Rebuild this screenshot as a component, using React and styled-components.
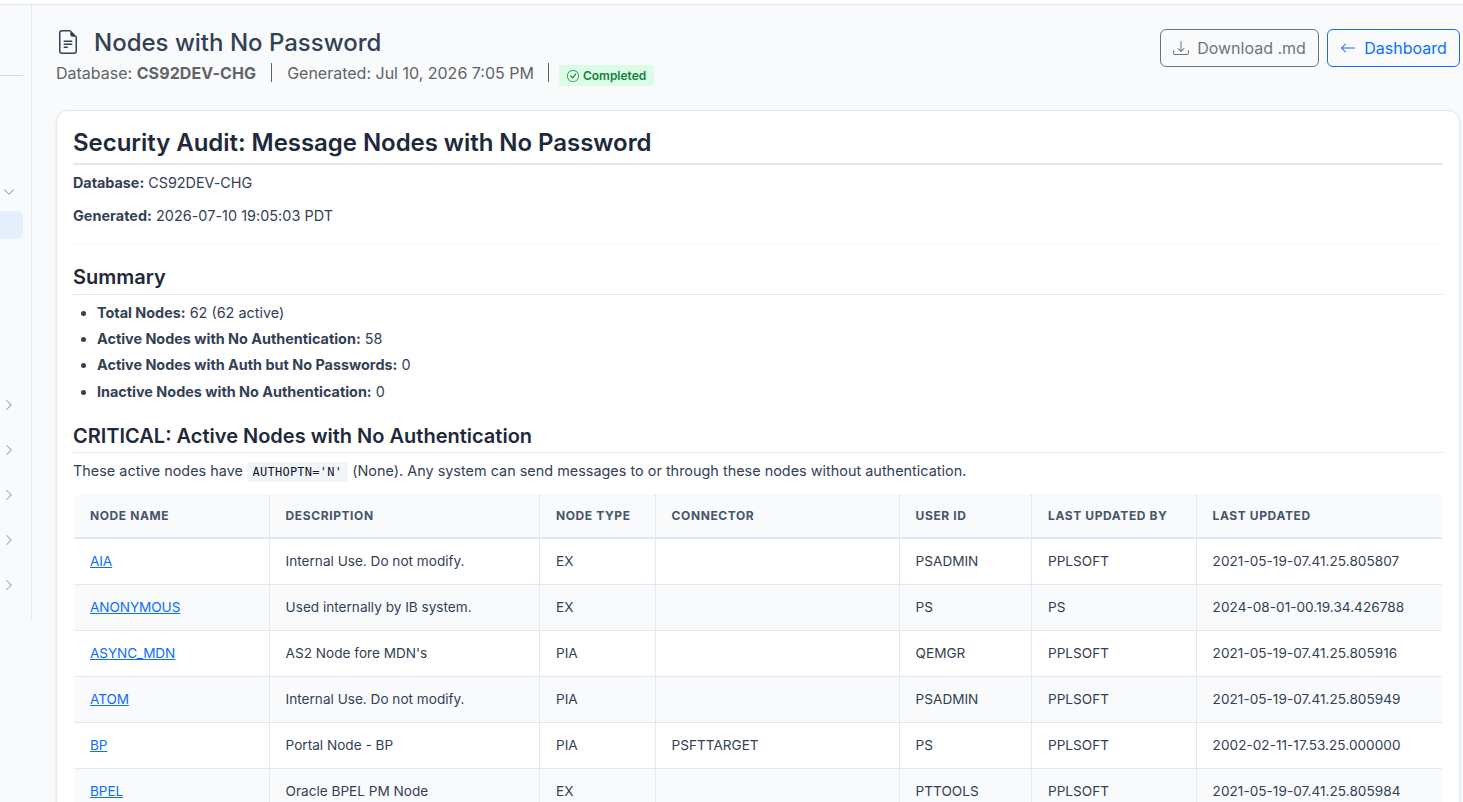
import styled, { createGlobalStyle } from "styled-components";
import {
  BsArrowLeft,
  BsCheckCircle,
  BsChevronDown,
  BsChevronRight,
  BsDownload,
  BsFileEarmarkText,
} from "react-icons/bs";

const GlobalStyle = createGlobalStyle`
  :root {
    --page: #f8fafc;
    --white: #ffffff;
    --border: #e2e8f0;
    --heading: #1e293b;
    --text: #334155;
    --muted: #626466;
    --slate: #475569;
    --blue: #0d6efd;
    --gray: #6c757d;
  }

  *,
  *::before,
  *::after {
    box-sizing: border-box;
  }

  body {
    margin: 0;
    overflow: hidden;
    background-color: var(--page);
    color: var(--text);
    font-family: Inter, "Liberation Sans", sans-serif;
    font-size: 16px;
    line-height: 1.5;
  }

  h1,
  h2,
  p,
  ul {
    margin: 0;
  }
`;

const Page = styled.div`
  height: 802px;
  overflow: hidden;
`;

const TopBar = styled.div`
  height: 5px;
  background-color: var(--white);
  border-bottom: 1px solid var(--border);
`;

const Body = styled.div`
  display: flex;
  align-items: flex-start;
`;

const Sidebar = styled.aside`
  flex: 0 0 32px;
  height: 615px;
  padding-top: 70px;
  padding-right: 8px;
  border-right: 1px solid var(--border);
`;

const SidebarDivider = styled.div`
  height: 1px;
  background-color: #d9dde3;
  margin-bottom: 93px;
`;

const NavRow = styled.div`
  display: flex;
  align-items: center;
  justify-content: flex-end;
  height: 45px;
  padding-right: 8px;
  color: #7c8ba1;

  svg {
    flex: none;
    width: 12px;
    height: 12px;
  }
`;

const ActiveItem = styled.div`
  height: 28px;
  margin: -3px 0 143px;
  border-radius: 0 6px 6px 0;
  background-color: #e4effd;
`;

const Main = styled.main`
  flex: 0 0 1404px;
  margin-left: 24px;
  padding-top: 24px;
`;

const Header = styled.header`
  display: flex;
  justify-content: space-between;
  align-items: flex-start;
  height: 81px;
`;

const Title = styled.h1`
  display: flex;
  align-items: center;
  height: 28px;
  font-size: 24px;
  font-weight: 500;
  line-height: 28px;

  svg {
    margin: 0 14px 2px 0;
  }
`;

const Meta = styled.div`
  display: flex;
  align-items: center;
  height: 24px;
  margin-top: 4px;
  color: var(--muted);
  white-space: pre;

  strong {
    letter-spacing: 0.1px;
  }
`;

const Separator = styled.span`
  width: 1px;
  height: 19px;
  margin: 0 ${({ $gap }) => $gap}px 1px;
  background-color: var(--muted);
`;

const StatusBadge = styled.span`
  display: inline-flex;
  align-items: center;
  gap: 4px;
  height: 21px;
  margin-top: 5px;
  margin-left: -4px;
  padding: 0 8px;
  border-radius: 4px;
  background-color: #dcfce7;
  color: #15803d;
  font-size: 12px;
  font-weight: 600;
`;

const Actions = styled.div`
  display: flex;
  gap: 8px;
`;

const Button = styled.button`
  display: flex;
  align-items: center;
  gap: 8px;
  height: 38px;
  padding: 0 12.2px;
  border: 1px solid currentColor;
  border-radius: 6px;
  background: transparent;
  color: ${({ $primary }) => ($primary ? "var(--blue)" : "var(--gray)")};
  font-family: inherit;
  font-size: 16px;
  line-height: 24px;
`;

const Card = styled.article`
  height: 800px;
  padding: 16px;
  border: 1px solid var(--border);
  border-radius: 12px;
  background-color: var(--white);
  box-shadow: 0 1px 3px rgba(15, 23, 42, 0.08);
  font-size: 14.4px;
`;

const ReportTitle = styled.h1`
  height: 38px;
  border-bottom: 2px solid var(--border);
  color: var(--heading);
  font-size: 24px;
  font-weight: 600;
  letter-spacing: -0.045px;
  line-height: 31px;
`;

const SectionTitle = styled.h2`
  height: ${({ $height }) => $height}px;
  margin-top: ${({ $top }) => $top}px;
  border-bottom: 1px solid var(--border);
  color: var(--heading);
  font-size: 20px;
  font-weight: 600;
  line-height: 30px;
`;

const Paragraph = styled.p`
  margin-top: ${({ $top }) => $top}px;
  letter-spacing: ${({ $tracking = 0 }) => $tracking}px;
  line-height: 24px;
`;

const Rule = styled.div`
  height: 1px;
  margin-top: 15px;
  background-color: #f5f7f9;
`;

const List = styled.ul`
  margin-top: 5px;
  padding-left: 24px;

  li {
    height: 26px;
    line-height: 26px;
  }

  li:last-child {
    margin-top: 1px;
  }
`;

const Code = styled.code`
  padding: 3px 6px 3px 5.6px;
  border-radius: 4px;
  background-color: #f1f5f9;
  color: #0f172a;
  font-family: "DejaVu Sans Mono", monospace;
  font-size: 12px;
  letter-spacing: 0.24px;
`;

const TableWrap = styled.div`
  margin-top: 9px;
  border: 1px solid transparent;
  border-radius: 8px;
  overflow: hidden;
`;

const Table = styled.table`
  width: 1368px;
  table-layout: fixed;
  border-collapse: separate;
  border-spacing: 0;
  font-size: 13.6px;

  th,
  td {
    padding: 0 15.6px;
    border-bottom: 1px solid var(--border);
    border-right: 1px solid var(--border);
    text-align: left;
    white-space: nowrap;
  }

  th:nth-child(1),
  td:nth-child(1),
  th:nth-child(3),
  td:nth-child(3),
  th:nth-child(6),
  td:nth-child(6) {
    padding-left: 16px;
  }

  th:last-child,
  td:last-child {
    border-right: 0;
  }

  th {
    height: 45px;
    border-bottom-width: 2px;
    background-color: var(--page);
    color: var(--slate);
    font-size: 12px;
    font-weight: 700;
    letter-spacing: 0.6px;
    text-transform: uppercase;
  }

  td {
    height: 46px;
  }

  td:last-child {
    letter-spacing: 0.03px;
  }

  tbody tr:nth-child(even) td {
    background-color: var(--page);
  }
`;

const NodeLink = styled.a`
  color: var(--blue);
  letter-spacing: -0.08px;
  text-decoration: underline;
`;

const columns = [
  { label: "Node Name", width: 196 },
  { label: "Description", width: 270 },
  { label: "Node Type", width: 116 },
  { label: "Connector", width: 244 },
  { label: "User ID", width: 132 },
  { label: "Last Updated By", width: 165 },
  { label: "Last Updated", width: 245 },
];

const nodes = [
  ["AIA", "Internal Use. Do not modify.", "EX", "", "PSADMIN", "PPLSOFT", "2021-05-19-07.41.25.805807"],
  ["ANONYMOUS", "Used internally by IB system.", "EX", "", "PS", "PS", "2024-08-01-00.19.34.426788"],
  ["ASYNC_MDN", "AS2 Node fore MDN's", "PIA", "", "QEMGR", "PPLSOFT", "2021-05-19-07.41.25.805916"],
  ["ATOM", "Internal Use. Do not modify.", "PIA", "", "PSADMIN", "PPLSOFT", "2021-05-19-07.41.25.805949"],
  ["BP", "Portal Node - BP", "PIA", "PSFTTARGET", "PS", "PPLSOFT", "2002-02-11-17.53.25.000000"],
  ["BPEL", "Oracle BPEL PM Node", "EX", "", "PTTOOLS", "PPLSOFT", "2021-05-19-07.41.25.805984"],
];

const summary = [
  ["Total Nodes:", "62 (62 active)"],
  ["Active Nodes with No Authentication:", "58"],
  ["Active Nodes with Auth but No Passwords:", "0"],
  ["Inactive Nodes with No Authentication:", "0"],
];

const NodesTable = () => (
  <TableWrap>
    <Table>
      <colgroup>
        {columns.map(({ label, width }) => (
          <col key={label} width={width} />
        ))}
      </colgroup>
      <thead>
        <tr>
          {columns.map(({ label }) => (
            <th key={label}>{label}</th>
          ))}
        </tr>
      </thead>
      <tbody>
        {nodes.map(([name, ...cells]) => (
          <tr key={name}>
            <td>
              <NodeLink href="#">{name}</NodeLink>
            </td>
            {cells.map((cell, index) => (
              <td key={index}>{cell}</td>
            ))}
          </tr>
        ))}
      </tbody>
    </Table>
  </TableWrap>
);

const App = () => {
  return (
    <Page>
      <GlobalStyle />
      <TopBar />
      <Body>
        <Sidebar>
          <SidebarDivider />
          <NavRow>
            <BsChevronDown />
          </NavRow>
          <ActiveItem />
          {[1, 2, 3, 4, 5].map((item) => (
            <NavRow key={item}>
              <BsChevronRight />
            </NavRow>
          ))}
        </Sidebar>
        <Main>
          <Header>
            <div>
              <Title>
                <BsFileEarmarkText />
                Nodes with No Password
              </Title>
              <Meta>
                <span>
                  Database: <strong>CS92DEV-CHG</strong>
                </span>
                <Separator $gap={15} />
                <span>Generated: Jul 10, 2026 7:05 PM</span>
                <Separator $gap={14} />
                <StatusBadge>
                  <BsCheckCircle />
                  Completed
                </StatusBadge>
              </Meta>
            </div>
            <Actions>
              <Button>
                <BsDownload />
                Download .md
              </Button>
              <Button $primary>
                <BsArrowLeft />
                Dashboard
              </Button>
            </Actions>
          </Header>
          <Card>
            <ReportTitle>Security Audit: Message Nodes with No Password</ReportTitle>
            <Paragraph $top={6} $tracking={-0.03}>
              <strong>Database:</strong> CS92DEV-CHG
            </Paragraph>
            <Paragraph $top={9} $tracking={0.04}>
              <strong>Generated:</strong> 2026-07-10 19:05:03 PDT
            </Paragraph>
            <Rule />
            <SectionTitle $top={18} $height={33}>
              Summary
            </SectionTitle>
            <List>
              {summary.map(([label, value]) => (
                <li key={label}>
                  <strong>{label}</strong> {value}
                </li>
              ))}
            </List>
            <SectionTitle $top={16} $height={32}>
              CRITICAL: Active Nodes with No Authentication
            </SectionTitle>
            <Paragraph $top={6} $tracking={0.017}>
              These active nodes have <Code>AUTHOPTN='N'</Code> (None). Any
              system can send messages to or through these nodes without
              authentication.
            </Paragraph>
            <NodesTable />
          </Card>
        </Main>
      </Body>
    </Page>
  );
};

export default App;
